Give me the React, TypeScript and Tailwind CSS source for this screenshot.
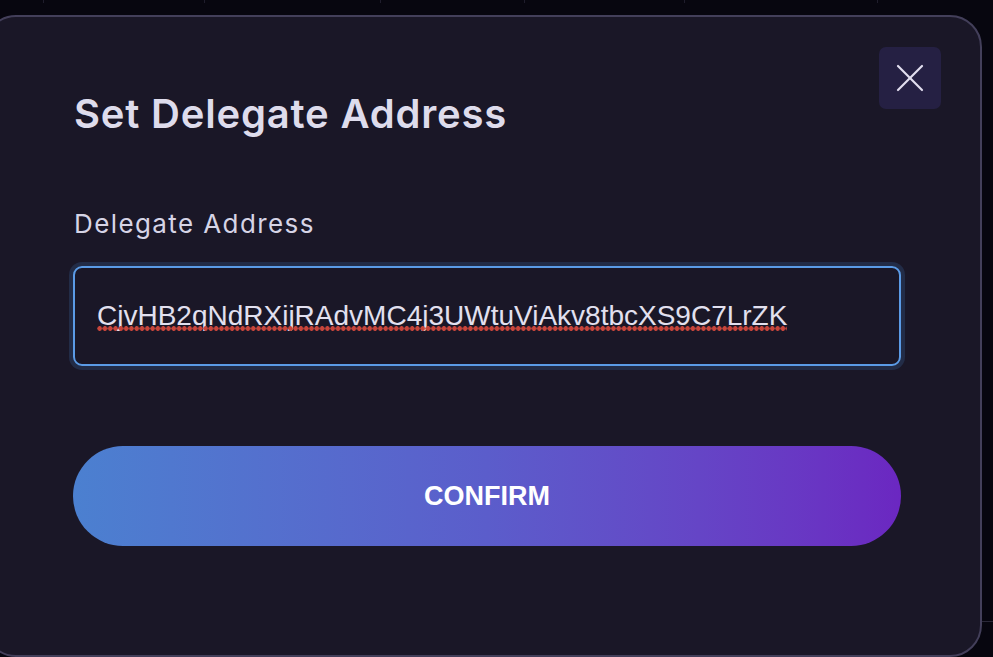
import React from "react";

export default function App() {
  const ticks = [43, 204, 380, 524, 684, 877];
  return (
    <div
      className="relative h-[657px] w-[993px] overflow-hidden bg-[#07060f]"
      style={{ fontFamily: "Inter, 'Noto Sans', sans-serif" }}
    >
      <div className="flex h-[3px] w-full">
        {ticks.map((x, i) => (
          <div key={i} className="h-[3px] w-px bg-[#1f1d2c]" style={{ marginLeft: i === 0 ? x : x - ticks[i - 1] - 1 }} />
        ))}
      </div>
      <div className="absolute left-[980px] top-[621px] h-px w-[20px] bg-[#2a2838]" />
      <div className="relative ml-[-16px] mt-[12px] h-[642px] w-[998px] rounded-[32px] border-2 border-[#433f5a] bg-[#1a1727]">
        <button className="absolute right-[39px] top-[30px] flex h-[62px] w-[62px] items-center justify-center rounded-[7px] bg-[#252043]">
          <svg width="28" height="28" viewBox="0 0 28 28" fill="none" stroke="#e3dff0" strokeWidth="2.2" strokeLinecap="round">
            <path d="M2 2 L26 26" />
            <path d="M26 2 L2 26" />
          </svg>
        </button>
        <div className="flex flex-col pl-[88px] pt-[77px]">
          <div className="text-[40px] font-semibold leading-[40px] text-[#dedcec] tracking-[0.8px]">
            Set Delegate Address
          </div>
          <div className="mt-[77px] text-[26px] font-normal leading-[26px] text-[#d6d4e6] tracking-[1.4px]">
            Delegate Address
          </div>
          <div className="ml-[-1px] mt-[29px] flex h-[100px] w-[828px] items-center rounded-[9px] border-2 border-[#5b9be6] pl-[22px] shadow-[0_0_0_4px_#222c47]">
            <span
              className="relative inline-block text-[28px] leading-[32px] text-[#e2e0ef]"
              style={{ fontFamily: "'Liberation Sans', Arial, sans-serif" }}
            >
              CjvHB2qNdRXijRAdvMC4j3UWtuViAkv8tbcXS9C7LrZK
              <span className="absolute left-0 right-0 top-[26px] h-[5px] bg-[radial-gradient(circle,#c8453b_2.1px,transparent_2.6px)] bg-[length:5.3px_5px] bg-repeat-x" />
            </span>
          </div>
          <button
            className="ml-[-1px] mt-[80px] flex h-[100px] w-[828px] items-center justify-center rounded-full bg-linear-to-r from-[#4b80d0] via-[#5b5dcb] to-[#6b27c1] text-[27px] font-bold text-white"
            style={{ fontFamily: "'Liberation Sans', Arial, sans-serif" }}
          >
            CONFIRM
          </button>
        </div>
      </div>
    </div>
  );
}
